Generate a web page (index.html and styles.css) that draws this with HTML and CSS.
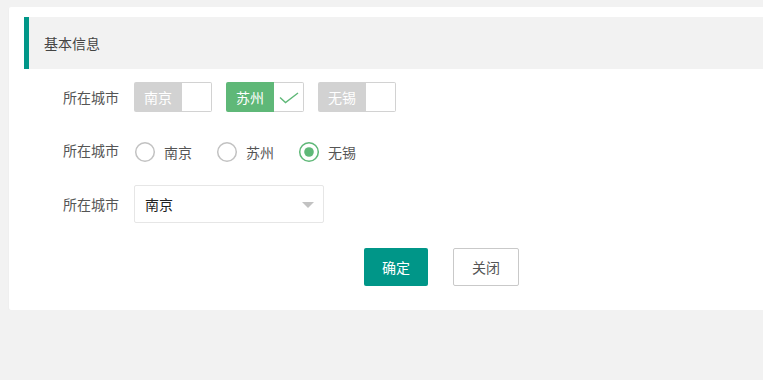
FILE: index.html
```html
<!DOCTYPE html>
<html lang="zh-CN">
  <head>
    <meta charset="UTF-8" />
    <meta name="viewport" content="width=device-width, initial-scale=1.0" />
    <title>基本信息</title>
    <link rel="stylesheet" href="styles.css">
  </head>
  <body>
    <div class="card">
      <div class="quote">基本信息</div>

      <form class="form">
        <div class="form-item">
          <label class="form-label">所在城市</label>
          <div class="input-block">
            <div class="checkbox">
              <span>南京</span><i></i>
            </div>
            <div class="checkbox checked">
              <span>苏州</span>
              <i>
                <svg width="20" height="12" viewBox="0 0 20 12">
                  <path d="M1 5.5 L6.5 10.5 L19 1" fill="none" stroke="#5FB878" stroke-width="1.4" />
                </svg>
              </i>
            </div>
            <div class="checkbox">
              <span>无锡</span><i></i>
            </div>
          </div>
        </div>

        <div class="form-item">
          <label class="form-label">所在城市</label>
          <div class="input-block">
            <div class="radio">
              <svg width="22" height="22" viewBox="0 0 22 22">
                <circle cx="11" cy="11" r="9.3" fill="none" stroke="#c2c2c2" stroke-width="1.5" />
              </svg>
              <span>南京</span>
            </div>
            <div class="radio">
              <svg width="22" height="22" viewBox="0 0 22 22">
                <circle cx="11" cy="11" r="9.3" fill="none" stroke="#c2c2c2" stroke-width="1.5" />
              </svg>
              <span>苏州</span>
            </div>
            <div class="radio">
              <svg width="22" height="22" viewBox="0 0 22 22">
                <circle cx="11" cy="11" r="9.3" fill="none" stroke="#5FB878" stroke-width="1.5" />
                <circle cx="11" cy="11" r="4.8" fill="#5FB878" />
              </svg>
              <span>无锡</span>
            </div>
          </div>
        </div>

        <div class="form-item">
          <label class="form-label">所在城市</label>
          <div class="input-block">
            <div class="select">
              <span>南京</span>
              <i class="arrow"></i>
            </div>
          </div>
        </div>

        <div class="btn-row">
          <button type="button" class="btn">确定</button>
          <button type="button" class="btn btn-primary">关闭</button>
        </div>
      </form>
    </div>
  </body>
</html>
```

FILE: styles.css
```css
* {
  margin: 0;
  padding: 0;
  box-sizing: border-box;
}

body {
  background-color: #f2f2f2;
  font-family: "Noto Sans CJK SC", "Microsoft YaHei", sans-serif;
  font-size: 14px;
  color: #555;
  padding: 7px 0 0 9px;
  overflow: hidden;
}

.card {
  background-color: #fff;
  border-radius: 2px 0 0 2px;
  box-shadow: 0 1px 2px 0 rgba(0, 0, 0, 0.05);
  padding: 10px 0 24px 15px;
}

.quote {
  background-color: #f2f2f2;
  border-left: 5px solid #009688;
  padding: 15px 15px;
  line-height: 22px;
  color: #444;
}

.form {
  padding-top: 9px;
}

.form-item {
  display: flex;
  align-items: center;
  height: 38px;
  margin-bottom: 15px;
}

.form-item:nth-child(3) {
  margin-top: 16px;
}

.form-label {
  width: 110px;
  padding-right: 15px;
  text-align: right;
  line-height: 38px;
}

.input-block {
  display: flex;
  align-items: center;
}

.checkbox {
  display: flex;
  height: 30px;
  margin-right: 14px;
}

.checkbox span {
  background-color: #d2d2d2;
  color: #fff;
  padding: 0 10px;
  line-height: 30px;
  border-radius: 2px 0 0 2px;
}

.checkbox i {
  width: 30px;
  height: 30px;
  border: 1px solid #d2d2d2;
  border-left: none;
  border-radius: 0 2px 2px 0;
  display: flex;
  align-items: center;
  justify-content: center;
}

.checkbox.checked span {
  background-color: #5FB878;
}

.checkbox.checked i svg {
  margin-top: 1px;
}

.radio {
  display: flex;
  align-items: center;
  line-height: 28px;
  margin-top: 4px;
  padding-right: 10px;
  margin-right: 14px;
}

.radio svg {
  margin-right: 8px;
}

.select {
  position: relative;
  width: 190px;
  height: 38px;
  border: 1px solid #e6e6e6;
  border-radius: 2px;
  padding-left: 10px;
  line-height: 36px;
  color: #222;
}

.arrow {
  position: absolute;
  right: 9px;
  top: 16px;
  width: 0;
  height: 0;
  border-left: 6px solid transparent;
  border-right: 6px solid transparent;
  border-top: 6px solid #c2c2c2;
}

.btn-row {
  display: flex;
  gap: 25px;
  padding-left: 340px;
  margin-top: 25px;
}

.btn {
  height: 38px;
  padding: 0 18px;
  font-family: inherit;
  font-size: 14px;
  color: #fff;
  background-color: #009688;
  border: none;
  border-radius: 2px;
  cursor: pointer;
}

.btn-primary {
  background-color: #fff;
  color: #555;
  border: 1px solid #c9c9c9;
}
```
